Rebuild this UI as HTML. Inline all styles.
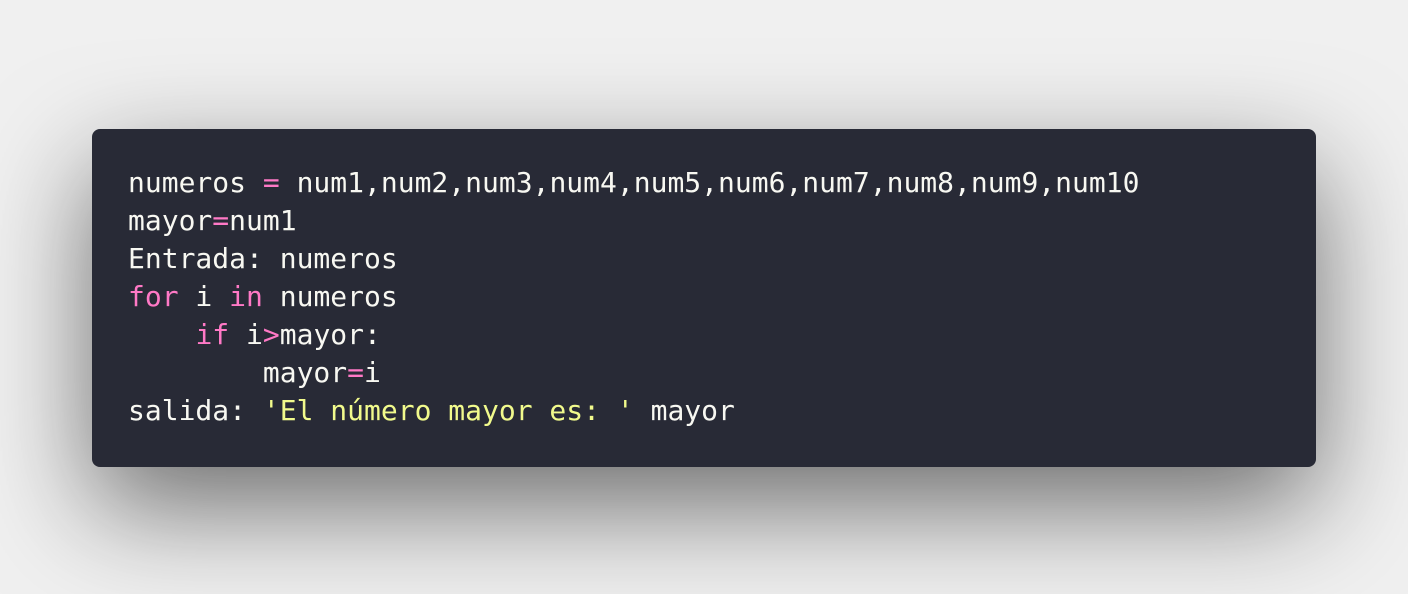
<!DOCTYPE html>
<html><head><meta charset="utf-8"><style>
html,body{margin:0;padding:0}
body{width:1408px;height:594px;background:#f0f0f0;position:relative;overflow:hidden}
.card{position:absolute;left:92px;top:129px;width:1224px;height:338px;background:#282a36;border-radius:8px;box-shadow:0 40px 110px rgba(0,0,0,0.55)}
pre{margin:0;position:absolute;left:36px;top:35px;font-family:"DejaVu Sans Mono","Liberation Mono",monospace;font-size:28px;line-height:38px;color:#f8f8f2}
.k{color:#ff79c6}.s{color:#f1fa8c}
</style></head><body>
<div class="card"><pre>numeros <span class="k">=</span> num1,num2,num3,num4,num5,num6,num7,num8,num9,num10
mayor<span class="k">=</span>num1
Entrada: numeros
<span class="k">for</span> i <span class="k">in</span> numeros
    <span class="k">if</span> i<span class="k">&gt;</span>mayor:
        mayor<span class="k">=</span>i
salida: <span class="s">'El número mayor es: '</span> mayor</pre></div>
</body></html>
